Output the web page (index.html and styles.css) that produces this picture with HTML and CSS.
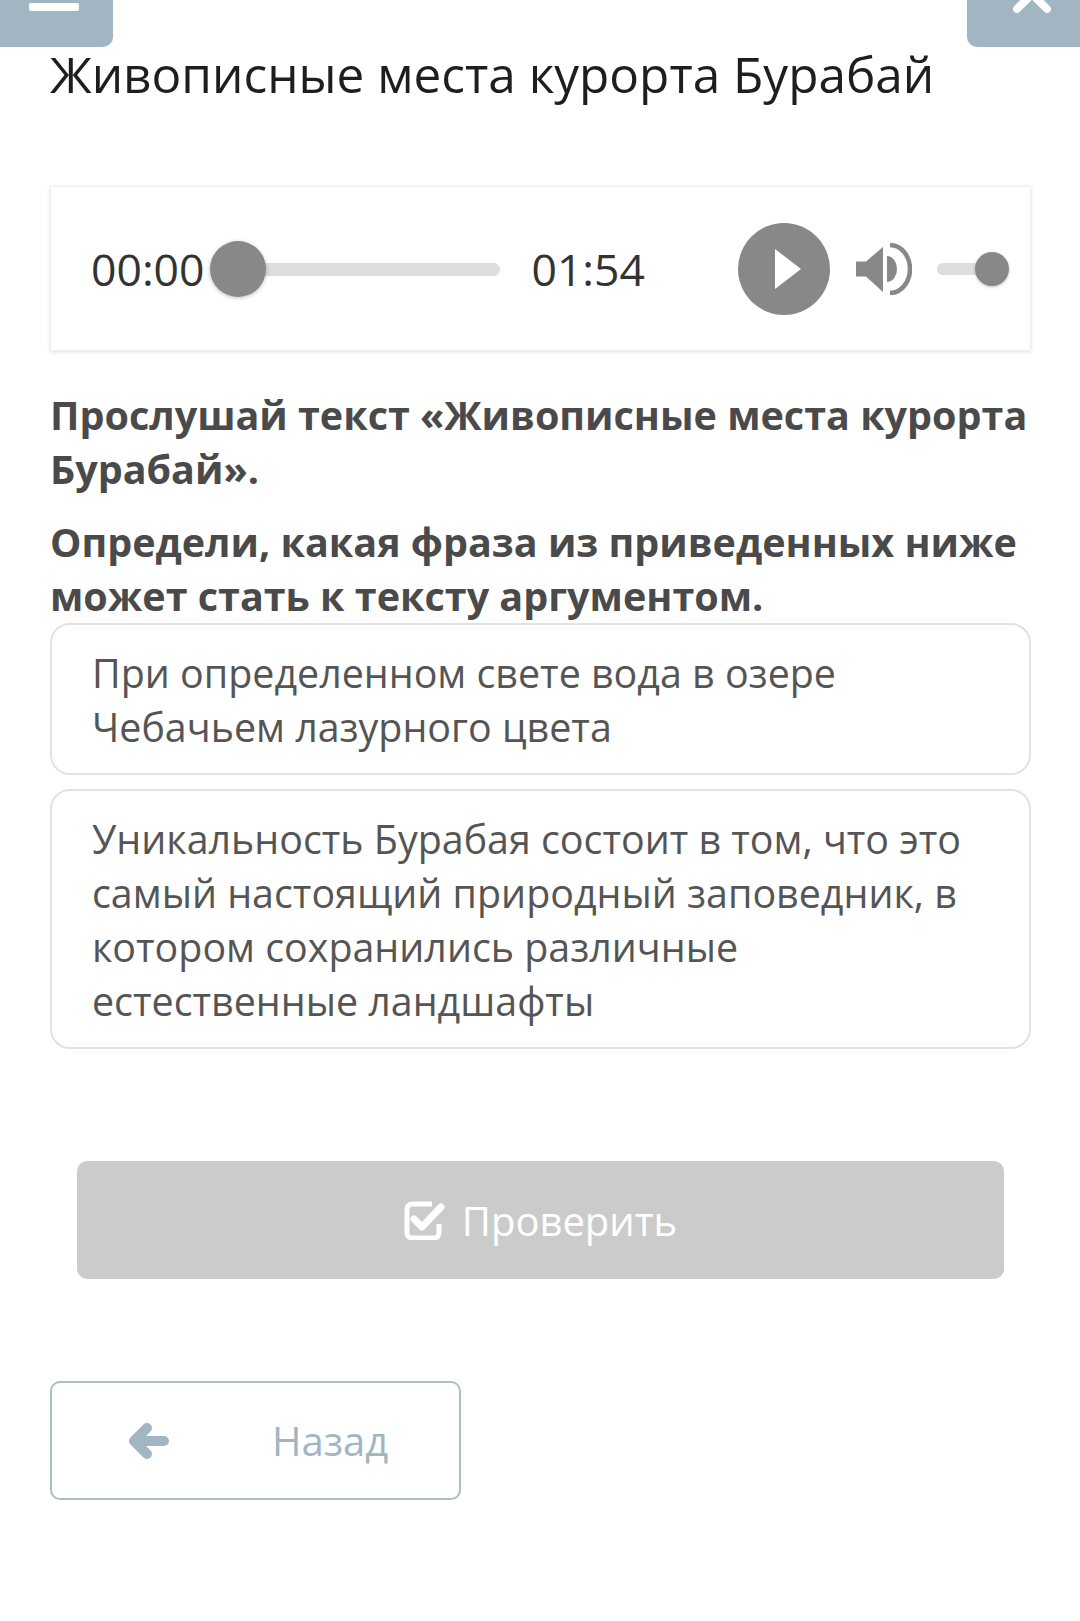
FILE: index.html
```html
<!DOCTYPE html>
<html lang="ru">
<head>
    <meta charset="UTF-8">
    <title>Живописные места курорта Бурабай</title>
    <link rel="stylesheet" href="styles.css">
</head>
<body>
    <div class="top-bar">
        <div class="tab tab-left"><span class="tab-minus"></span></div>
        <div class="tab tab-right">
            <svg class="tab-close" width="40" height="14" viewBox="0 0 40 14">
                <path d="M20 -6 L5 9 M20 -6 L35 9" stroke="#fff" stroke-width="8" stroke-linecap="round" fill="none"/>
            </svg>
        </div>
    </div>

    <div class="page">
        <h1 class="title">Живописные места курорта Бурабай</h1>

        <div class="player">
            <span class="time">00:00</span>
            <div class="seek">
                <div class="seek-track"></div>
                <div class="seek-thumb"></div>
            </div>
            <span class="time time-end">01:54</span>
            <div class="play-button">
                <svg width="30" height="42" viewBox="0 0 30 42">
                    <path d="M2 1 L28 21 L2 41 Z" fill="#fff"/>
                </svg>
            </div>
            <svg class="volume-icon" width="56" height="52" viewBox="0 0 56 52">
                <rect x="0" y="18.5" width="11" height="15" fill="#888"/>
                <path d="M10 18.5 L27 4 L27 49 L10 33.5 Z" fill="#888"/>
                <path d="M31 13 A10 13 0 0 1 31 39 Z" fill="#888"/>
                <path d="M34 2 A20 24 0 0 1 34 50" stroke="#888" stroke-width="4.5" fill="none"/>
            </svg>
            <div class="volume">
                <div class="volume-track"></div>
                <div class="volume-thumb"></div>
            </div>
        </div>

        <div class="question">
            <p>Прослушай текст «Живописные места курорта Бурабай».</p>
            <p>Определи, какая фраза из приведенных ниже может стать к тексту аргументом.</p>
        </div>

        <div class="options">
            <div class="option">При определенном свете вода в озере Чебачьем лазурного цвета</div>
            <div class="option">Уникальность Бурабая состоит в том, что это самый настоящий природный заповедник, в котором сохранились различные естественные ландшафты</div>
        </div>

        <button class="check-button" disabled>
            <svg width="42" height="40" viewBox="0 0 42 40">
                <path d="M28 4 H8 A5 5 0 0 0 3 9 V33 A5 5 0 0 0 8 38 H30 A5 5 0 0 0 35 33 V24" stroke="#fff" stroke-width="5" fill="none"/>
                <path d="M10 19 L18 27 L37 7" stroke="#fff" stroke-width="7" stroke-linecap="round" stroke-linejoin="round" fill="none"/>
            </svg>
            <span>Проверить</span>
        </button>

        <button class="back-button">
            <svg width="42" height="36" viewBox="0 0 42 36">
                <path d="M36 18 H8 M19 5 L6 18 L19 31" stroke="#a2b5c3" stroke-width="10" stroke-linecap="round" stroke-linejoin="round" fill="none"/>
            </svg>
            <span>Назад</span>
        </button>
    </div>
</body>
</html>
```

FILE: styles.css
```css
body {
    margin: 0;
    font-family: "Open Sans", "Noto Sans", sans-serif;
    background-color: #fff;
    color: #333;
}
.top-bar {
    display: flex;
    justify-content: space-between;
    height: 47px;
}
.tab {
    width: 113px;
    height: 47px;
    background-color: #a2b5c2;
    display: flex;
    justify-content: center;
}
.tab-left {
    border-bottom-right-radius: 10px;
}
.tab-right {
    border-bottom-left-radius: 10px;
}
.tab-minus {
    display: block;
    width: 50px;
    height: 8px;
    margin-top: 3px;
    margin-left: -6px;
    background-color: #fff;
    border-radius: 2px;
}
.tab-close {
    display: block;
    margin-left: 16px;
}
.page {
    padding: 0 49px 0 50px;
}
.title {
    margin: 0;
    font-size: 49.5px;
    font-weight: 400;
    line-height: 54px;
    color: #1e1e1e;
}
.player {
    margin-top: 85px;
    height: 165px;
    box-sizing: border-box;
    display: flex;
    align-items: center;
    padding-left: 40px;
    background-color: #fff;
    border: 1px solid #eee;
    box-shadow: 0 1px 4px rgba(0, 0, 0, 0.12);
}
.time {
    font-size: 44.5px;
    color: #333;
}
.time-end {
    margin-left: 31px;
}
.seek {
    position: relative;
    width: 290px;
    height: 56px;
    margin-left: 6px;
}
.seek-track {
    position: absolute;
    left: 28px;
    right: 0;
    top: 22px;
    height: 13px;
    border-radius: 7px;
    background-color: #ddd;
}
.seek-thumb {
    position: absolute;
    left: 0;
    top: 0;
    width: 56px;
    height: 56px;
    border-radius: 50%;
    background-color: #888;
    box-shadow: 0 1px 4px rgba(0, 0, 0, 0.25);
}
.play-button {
    width: 92px;
    height: 92px;
    margin-left: 93px;
    border-radius: 50%;
    background-color: #888;
    display: flex;
    justify-content: center;
    align-items: center;
}
.play-button svg {
    margin-left: 8px;
}
.volume-icon {
    margin-left: 26px;
}
.volume {
    position: relative;
    width: 72px;
    height: 34px;
    margin-left: 25px;
}
.volume-track {
    position: absolute;
    left: 0;
    right: 16px;
    top: 11px;
    height: 12px;
    border-radius: 6px;
    background-color: #ddd;
}
.volume-thumb {
    position: absolute;
    right: 0;
    top: 0;
    width: 34px;
    height: 34px;
    border-radius: 50%;
    background-color: #888;
    box-shadow: 0 1px 3px rgba(0, 0, 0, 0.25);
}
.question {
    margin-top: 37px;
    color: #4a4a4a;
}
.question p {
    margin: 0 0 19px;
    font-size: 39.5px;
    font-weight: 700;
    line-height: 54px;
}
.question p:last-child {
    margin-bottom: 0;
}
.options {
    display: flex;
    flex-direction: column;
    gap: 14px;
}
.option {
    padding: 21px 40px 19px;
    border: 2px solid #e2e2e2;
    border-radius: 20px;
    font-size: 39.4px;
    line-height: 54px;
    color: #555;
}
.check-button {
    display: flex;
    justify-content: center;
    align-items: center;
    gap: 16px;
    width: calc(100% - 54px);
    height: 118px;
    margin: 112px 27px 0;
    border: none;
    border-radius: 10px;
    background-color: #cbcbcb;
    color: #fff;
    font-family: inherit;
    font-size: 40px;
    padding: 0;
}
.back-button {
    display: flex;
    align-items: center;
    width: 411px;
    height: 119px;
    margin-top: 102px;
    padding: 0 0 0 76px;
    border: 2px solid #aebcc6;
    border-radius: 10px;
    background-color: #fff;
    color: #a3b5c2;
    font-family: inherit;
    font-size: 40px;
}
.back-button span {
    margin-left: 102px;
}
```
